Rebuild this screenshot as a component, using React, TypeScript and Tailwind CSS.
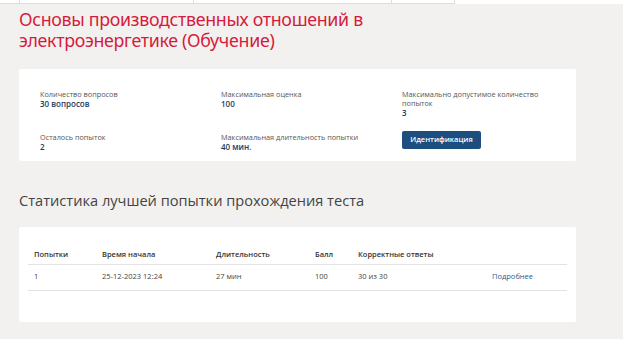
import React from 'react'

const font = { fontFamily: '"Open Sans", "Noto Sans", sans-serif' }

interface InfoProps {
  label: string
  value: string
}

const Info: React.FC<InfoProps> = ({ label, value }) => (
  <div className="leading-[9px]">
    <div className="text-[7.3px] text-[#555]">{label}</div>
    <div className="text-[8px] font-semibold text-[#1e3a5c]">{value}</div>
  </div>
)

const rows = [
  { n: '1', start: '25-12-2023 12:24', dur: '27 мин', score: '100', correct: '30 из 30' },
]

export default function App() {
  return (
    <div className="w-[643px] h-[349px] bg-white overflow-hidden" style={font}>
      {/* cut-off table from the page above */}
      <div className="h-[4px] w-[455px] border-b border-[#ddd] flex">
        <div className="w-[20px] border-r border-[#ddd]" />
        <div className="w-[174px] border-r border-[#ddd]" />
        <div className="w-[198px] border-r border-[#ddd]" />
        <div className="w-[63px] border-r border-[#ddd]" />
      </div>
      <div className="w-[623px] h-[335px] bg-[#f2f1ef] pl-[19px] pt-[5px]">
        <h1
          className="text-[17.8px] leading-[21px] text-[#d51b3d] font-[450] tracking-[-0.3px] w-[420px]"
          style={{ fontFamily: '"Noto Sans", sans-serif' }}
        >
          Основы производственных отношений в электроэнергетике (Обучение)
        </h1>

        <div className="mt-[18px] w-[557px] h-[92px] bg-white rounded-[2px] pl-[21px] pt-[21px] grid grid-cols-[181px_181px_160px] content-start gap-y-[16px]">
          <Info label="Количество вопросов" value="30 вопросов" />
          <Info label="Максимальная оценка" value="100" />
          <Info label="Максимально допустимое количество попыток" value="3" />
          <Info label="Осталось попыток" value="2" />
          <Info label="Максимальная длительность попытки" value="40 мин." />
          <div>
            <button className="block h-[18px] w-[79px] bg-[#1d4e80] text-white text-[7.5px] font-semibold rounded-[2px] -mt-[2px]">
              Идентификация
            </button>
          </div>
        </div>

        <h2 className="mt-[29px] text-[14.6px] leading-[20px] text-[#444]">
          Статистика лучшей попытки прохождения теста
        </h2>

        <div className="mt-[17px] w-[557px] h-[95px] bg-white rounded-[2px] px-[9px] pt-[19px]">
          <table className="w-full table-fixed text-[7.5px] text-left">
            <thead>
              <tr className="border-b border-[#e3e3e3] text-[#333]">
                <th className="pl-[6px] h-[18px] w-[74px] font-semibold">Попытки</th>
                <th className="w-[114px] font-semibold">Время начала</th>
                <th className="w-[99px] font-semibold">Длительность</th>
                <th className="w-[43px] font-semibold">Балл</th>
                <th className="w-[134px] font-semibold">Корректные ответы</th>
                <th />
              </tr>
            </thead>
            <tbody>
              {rows.map((r) => (
                <tr key={r.n} className="border-b border-[#e3e3e3] text-[#444]">
                  <td className="pl-[6px] h-[26px]">{r.n}</td>
                  <td>{r.start}</td>
                  <td>{r.dur}</td>
                  <td>{r.score}</td>
                  <td>{r.correct}</td>
                  <td className="text-[#2d5d8f]">Подробнее</td>
                </tr>
              ))}
            </tbody>
          </table>
        </div>
      </div>
    </div>
  )
}
